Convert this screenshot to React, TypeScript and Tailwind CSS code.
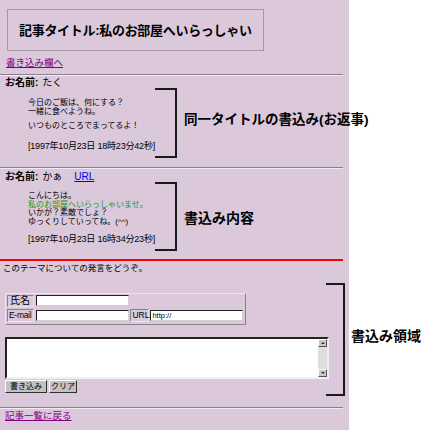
import React from "react";

const FONT = '"Liberation Sans", "Noto Sans CJK JP", sans-serif';

function Bracket({ h, w }: { h: number; w: number }) {
  return (
    <div
      className="shrink-0 border-y-2 border-r-2 border-[#1a1a1a]"
      style={{ height: h, width: w }}
    />
  );
}

function Hr() {
  return <div className="w-[343px] h-[2px] border-t border-t-[#8a7f8a] border-b border-b-[#f2eaf2]" />;
}

export default function App() {
  return (
    <div
      className="w-[430px] h-[430px] overflow-hidden text-black bg-[linear-gradient(to_right,#dbc8db_349px,#ffffff_349px)]"
      style={{ fontFamily: FONT }}
    >
      {/* Title box */}
      <div className="ml-[7px] pt-[9px]">
        <div className="w-[257px] h-[42px] border border-[#a39aa3] flex items-center pl-[11px]">
          <span className="text-[13px] font-bold leading-none tracking-[-0.3px]">記事タイトル:私のお部屋へいらっしゃい</span>
        </div>
      </div>

      <a className="block mt-[6px] ml-[6px] text-[9.5px] leading-[12px] text-[#800080] underline w-fit">書き込み欄へ</a>

      <div className="mt-[5px]"><Hr /></div>

      {/* Post 1 */}
      <div className="mt-[1px] ml-[5px] text-[10px] leading-[12px] flex gap-[4px]">
        <span className="font-bold">お名前:</span>
        <span>たく</span>
      </div>
      <div className="flex items-start -mt-[1px]">
        <div className="w-[155px] pl-[28px] pt-[10px] text-[8px] leading-[9px] shrink-0 whitespace-nowrap">
          <div>今日のご飯は、何にする？</div>
          <div>一緒に食べようね。</div>
          <div className="mt-[5px]">いつものところでまってるよ！</div>
          <div className="mt-[12px] text-[9px] tracking-[-0.2px]">[1997年10月23日 18時23分42秒]</div>
        </div>
        <Bracket h={70} w={22} />
        <div className="ml-[7px] mt-[24px] text-[13.5px] font-bold leading-[16px] whitespace-nowrap">同一タイトルの書込み(お返事)</div>
      </div>

      <div className="mt-[9px]"><Hr /></div>

      {/* Post 2 */}
      <div className="mt-[2px] ml-[5px] text-[10px] leading-[12px] flex">
        <span className="font-bold">お名前:</span>
        <span className="ml-[4px]">かぁ</span>
        <a className="ml-[12px] text-[#0000ee] underline">URL</a>
      </div>
      <div className="flex items-start -mt-[1px]">
        <div className="w-[155px] pl-[28px] pt-[10px] text-[8px] leading-[8.5px] shrink-0 whitespace-nowrap">
          <div>こんにちは。</div>
          <div className="text-[#119a11]">私のお部屋へいらっしゃいませ。</div>
          <div>いかが？素敵でしょ？</div>
          <div>ゆっくりしていってね。(^^)</div>
          <div className="mt-[9px] text-[9px] tracking-[-0.2px]">[1997年10月23日 16時34分23秒]</div>
        </div>
        <Bracket h={69} w={22} />
        <div className="ml-[7px] mt-[28px] text-[14px] font-bold leading-[16px] whitespace-nowrap">書込み内容</div>
      </div>

      <div className="mt-[8px] w-[343px] h-[2px] bg-[#ff0000]" />

      <div className="mt-[1px] ml-[3px] text-[8.5px] leading-[12px]">このテーマについての発言をどうぞ。</div>

      {/* Form area */}
      <div className="flex items-start mt-[9px]">
        <div className="w-[326px] pl-[5px] pt-[10px] shrink-0">
          {/* table */}
          <div className="w-[241px] h-[32px] border border-t-[#ece4ec] border-l-[#ece4ec] border-b-[#8a808a] border-r-[#8a808a] p-[1px] flex flex-col gap-[2px] text-[9px] leading-[11px]">
            <div className="flex gap-[1px] h-[12px]">
              <div className="w-[27px] h-[12px] border border-t-[#8a808a] border-l-[#8a808a] border-b-[#ece4ec] border-r-[#ece4ec] pl-[2px] text-[10px] leading-[10px]">氏名</div>
              <div className="w-[95px] h-[12px] pl-[1px]">
                <div className="w-[93px] h-[11px] bg-white border border-t-[#222] border-l-[#222] border-b-[#d0d0d0] border-r-[#d0d0d0]" />
              </div>
            </div>
            <div className="flex gap-[1px] h-[13px]">
              <div className="w-[27px] h-[13px] border border-t-[#8a808a] border-l-[#8a808a] border-b-[#ece4ec] border-r-[#ece4ec] pl-[1px] text-[8.5px] leading-[11px] tracking-[-0.3px]">E-mail</div>
              <div className="w-[95px] h-[13px] pl-[1px] pt-[1px]">
                <div className="w-[93px] h-[11px] bg-white border border-t-[#222] border-l-[#222] border-b-[#d0d0d0] border-r-[#d0d0d0]" />
              </div>
              <div className="w-[19px] h-[13px] border border-t-[#8a808a] border-l-[#8a808a] border-b-[#ece4ec] border-r-[#ece4ec] pl-[1px] text-[8.5px] leading-[11px]">URL</div>
              <div className="w-[94px] h-[13px] pt-[1px]">
                <div className="w-[93px] h-[11px] bg-white border border-t-[#222] border-l-[#222] border-b-[#d0d0d0] border-r-[#d0d0d0] text-[7.5px] leading-[9px] pl-[1px] text-black">http://</div>
              </div>
            </div>
          </div>

          {/* textarea */}
          <div className="mt-[12px] w-[324px] h-[42px] bg-white border-2 border-t-[#222] border-l-[#222] border-b-[#f0f0f0] border-r-[#f0f0f0] flex justify-end">
            <div className="w-[9px] h-full flex flex-col bg-[#dedede]">
              <div className="h-[8px] bg-[#c8c8c8] border border-t-white border-l-white border-b-[#555] border-r-[#555] flex items-center justify-center">
                <div className="w-0 h-0 border-l-[2px] border-r-[2px] border-b-[2px] border-l-transparent border-r-transparent border-b-[#333]" />
              </div>
              <div className="flex-1" />
              <div className="h-[8px] bg-[#c8c8c8] border border-t-white border-l-white border-b-[#555] border-r-[#555] flex items-center justify-center">
                <div className="w-0 h-0 border-l-[2px] border-r-[2px] border-t-[2px] border-l-transparent border-r-transparent border-t-[#333]" />
              </div>
            </div>
          </div>

          {/* buttons */}
          <div className="mt-[1px] flex gap-[2px]">
            <div className="w-[42px] h-[13px] bg-[#c4c0c4] border border-t-white border-l-white border-b-[#303030] border-r-[#303030] text-[8px] leading-[11px] text-center">書き込み</div>
            <div className="w-[28px] h-[13px] bg-[#c4c0c4] border border-t-white border-l-white border-b-[#303030] border-r-[#303030] text-[8px] leading-[11px] text-center">クリア</div>
          </div>
        </div>
        <Bracket h={113} w={19} />
        <div className="ml-[6px] mt-[45px] text-[14px] font-bold leading-[16px] whitespace-nowrap">書込み領域</div>
      </div>

      <div className="mt-[11px]"><Hr /></div>

      <a className="block mt-[1px] ml-[5px] text-[9.5px] leading-[12px] text-[#800080] underline w-fit">記事一覧に戻る</a>
    </div>
  );
}
